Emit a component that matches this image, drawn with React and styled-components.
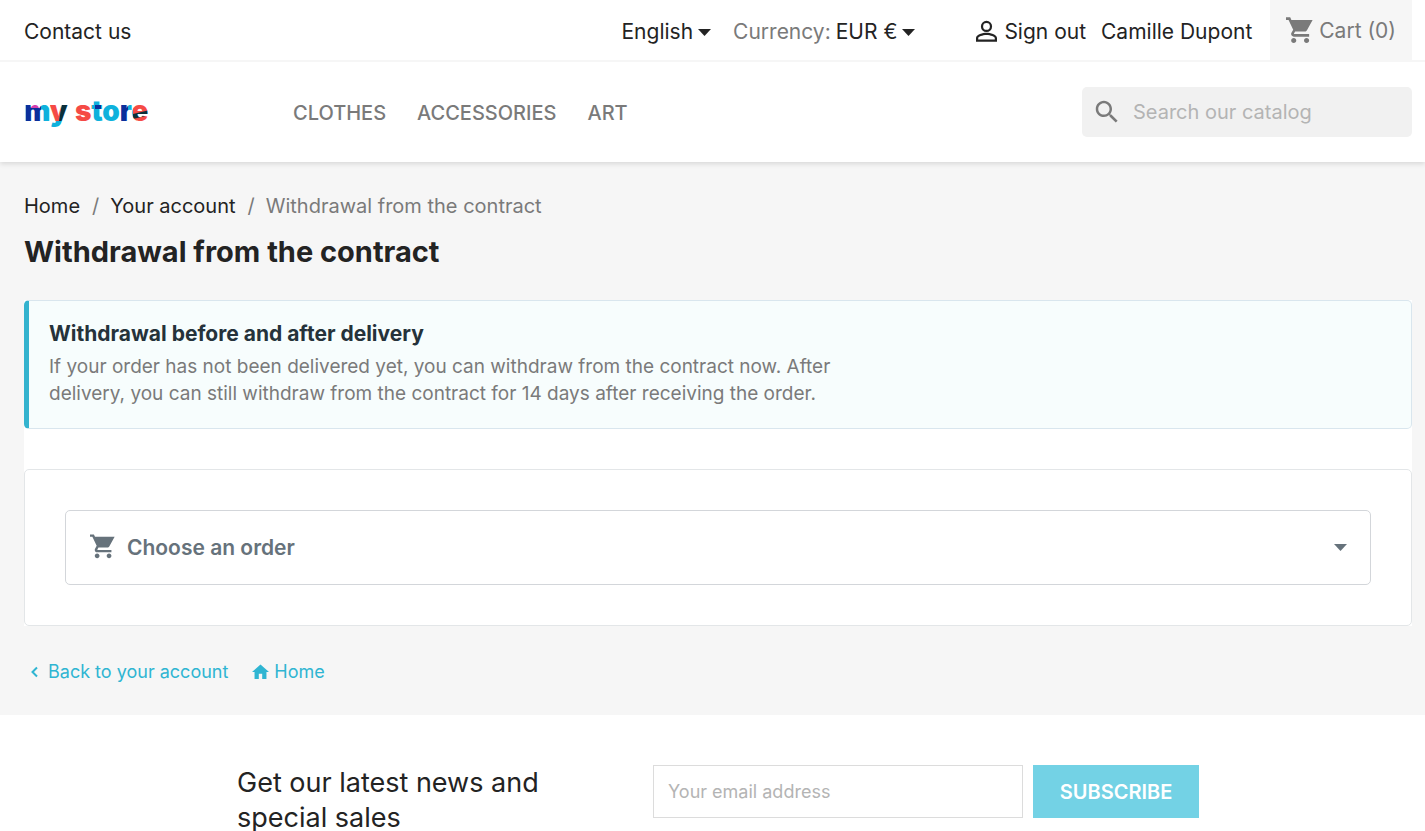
import React from "react";
import styled, { createGlobalStyle } from "styled-components";

const GlobalStyle = createGlobalStyle`
  *, *::before, *::after { box-sizing: border-box; }
  body {
    margin: 0;
    background: #fff;
    color: #232323;
    font-family: Inter, "Liberation Sans", sans-serif;
    font-size: 21px;
    line-height: 28px;
  }
  h1, h2, p, ul, ol { margin: 0; padding: 0; list-style: none; }
  a { color: inherit; text-decoration: none; }
  input, select, button { font: inherit; color: inherit; letter-spacing: inherit; border: 0; background: none; }
  svg { display: block; flex: none; }
`;

const Page = styled.div`
  display: flex;
  flex-direction: column;
`;

const Header = styled.header`
  position: relative;
  background: #fff;
  box-shadow: 0 2px 5px rgba(0, 0, 0, 0.12);
`;

const Container = styled.div`
  padding: 0 13px 0 24px;
`;

const TopBar = styled.div`
  border-bottom: 2px solid #f6f6f6;
`;

const TopBarInner = styled(Container)`
  display: flex;
  align-items: center;
  justify-content: space-between;
  height: 60px;
`;

const ContactLink = styled.a`
  padding-top: 4px;
`;

const TopRight = styled.div`
  display: flex;
  align-items: center;
  height: 100%;
`;

const Selector = styled.div`
  display: flex;
  align-items: center;
  gap: 5px;
  margin-right: ${(p) => p.$after}px;
  padding-top: 4px;
`;

const SelectorLabel = styled.label`
  color: #7a7a7a;
`;

const SelectorField = styled.select`
  appearance: none;
  field-sizing: content;
  padding: 0;
  cursor: pointer;
`;

const UserLinks = styled.nav`
  display: flex;
  align-items: center;
  gap: 15px;
  margin-right: 18px;
  padding-top: 4px;
`;

const UserLink = styled.a`
  display: flex;
  align-items: center;
  gap: 7px;
`;

const CartLink = styled.a`
  display: flex;
  align-items: center;
  gap: 6px;
  height: 100%;
  padding: 2px 16px 0;
  background: #f6f6f6;
  color: #7a7a7a;
`;

const MainBar = styled(Container)`
  display: flex;
  align-items: center;
  height: 100px;
`;

const LogoLink = styled.a`
  width: 269px;
`;

const Menu = styled.nav`
  display: flex;
  flex: 1;
  gap: 31px;
  padding-top: 2px;
  color: #7a7a7a;
  font-size: 20px;
  font-weight: 500;
  text-transform: uppercase;
`;

const SearchBox = styled.form`
  display: flex;
  align-items: center;
  gap: 11px;
  width: 330px;
  height: 50px;
  padding: 0 10px;
  border-radius: 5px;
  background: #f1f1f1;
  color: #7a7a7a;
`;

const SearchInput = styled.input`
  flex: 1;
  min-width: 0;
  padding: 0;
  outline: 0;
  font-size: 20px;
  &::placeholder { color: #b4b4b4; opacity: 1; }
`;

const Main = styled.main`
  padding: 30px 13px 29px 24px;
  background: #f6f6f6;
`;

const Breadcrumb = styled.ol`
  display: flex;
  color: #7a7a7a;
  font-size: 20px;
  li + li::before { content: "/"; margin: 0 11px 0 12px; }
  a { color: #232323; }
`;

const Title = styled.h1`
  margin: 14px 0 30px;
  font-size: 29px;
  font-weight: 700;
  line-height: 36px;
`;

const Content = styled.section`
  background: #fff;
`;

const Notice = styled.div`
  margin-bottom: 40px;
  padding: 19px 20px 21px;
  border: 1px solid #d9e6ee;
  border-left: 5px solid #34b3ce;
  border-radius: 5px;
  background: #f7fdfd;
`;

const NoticeTitle = styled.h2`
  margin-bottom: 6px;
  color: #25323a;
  font-size: 21px;
  font-weight: 700;
  line-height: 27px;
`;

const NoticeText = styled.p`
  max-width: 800px;
  color: #7a7a7a;
  font-size: 19px;
  line-height: 27px;
`;

const Panel = styled.div`
  padding: 40px;
  border: 1px solid #e3e6e8;
  border-radius: 5px;
`;

const OrderPicker = styled.label`
  display: flex;
  align-items: center;
  gap: 12px;
  height: 75px;
  padding: 0 23px 0 24px;
  border: 1px solid #d3d6da;
  border-radius: 5px;
  color: #66727b;
  cursor: pointer;
`;

const OrderSelect = styled.select`
  flex: 1;
  min-width: 0;
  appearance: none;
  padding: 0;
  font-weight: 600;
`;

const PageLinks = styled.nav`
  display: flex;
  gap: 24px;
  padding: 32px 6px 0;
  color: #2fb5d2;
  font-size: 18px;
`;

const PageLink = styled.a`
  display: flex;
  align-items: center;
  gap: 5px;
`;

const Footer = styled.footer`
  padding: 50px 13px 0 24px;
`;

const Newsletter = styled.div`
  display: flex;
  justify-content: space-between;
  max-width: 962px;
  margin: 0 auto;
`;

const NewsletterText = styled.p`
  max-width: 340px;
  font-size: 27px;
  line-height: 35px;
`;

const NewsletterForm = styled.form`
  display: flex;
  gap: 10px;
  width: 546px;
`;

const EmailInput = styled.input`
  flex: 1;
  min-width: 0;
  height: 53px;
  padding: 0 14px;
  border: 1px solid #dcdcdc;
  font-size: 18px;
  &::placeholder { color: #b4b4b4; opacity: 1; }
`;

const SubscribeButton = styled.button`
  width: 166px;
  height: 53px;
  padding: 0;
  background: #73d2e5;
  color: #fff;
  font-size: 20px;
  font-weight: 600;
  text-transform: uppercase;
`;

const CartIcon = ({ size }) => (
  <svg width={size} height={size} viewBox="1 3 21 20" fill="currentColor" overflow="visible" aria-hidden="true">
    <path d="M7 18c-1.100 0-1.990.9-1.990 2S5.900 22 7 22s2-.9 2-2-.9-2-2-2zM1 2v2h2l3.600 7.590-1.350 2.450c-.16.28-.25.61-.25.960 0 1.100.9 2 2 2h12v-2H7.420c-.14 0-.25-.11-.25-.25l.03-.12.9-1.630h7.450c.75 0 1.410-.41 1.750-1.030L21.700 4H5.210l-.94-2H1zm16 16c-1.100 0-1.990.9-1.990 2s.89 2 1.990 2 2-.9 2-2-.9-2-2-2z" />
  </svg>
);

const PersonIcon = () => (
  <svg width="21" height="21" viewBox="3 4 18 18" fill="currentColor" overflow="visible" aria-hidden="true">
    <path d="M12 4.900a2.900 2.900 0 1 1 0 5.800 2.900 2.900 0 0 1 0-5.800M12 3a4.800 4.800 0 1 0 0 9.600 4.800 4.800 0 0 0 0-9.600zM12 13.200c-3 0-9 1.500-9 4.500V21h18v-3.300c0-3-6-4.500-9-4.500zm7.100 5.900H4.900v-1.400c0-.9 3.700-2.600 7.100-2.600s7.100 1.700 7.100 2.600v1.400z" />
  </svg>
);

const SearchIcon = () => (
  <svg width="30" height="30" viewBox="0 0 24 24" fill="currentColor" aria-hidden="true">
    <path d="M15.500 14h-.79l-.28-.27C15.410 12.590 16 11.110 16 9.500 16 5.910 13.090 3 9.500 3S3 5.910 3 9.500 5.910 16 9.500 16c1.610 0 3.090-.59 4.230-1.570l.27.28v.79l5 4.990L20.490 19l-4.990-5zm-6 0C7.010 14 5 11.990 5 9.500S7.010 5 9.500 5 14 7.010 14 9.500 11.990 14 9.500 14z" />
  </svg>
);

const Caret = () => (
  <svg width="13" height="7" viewBox="0 0 13 7" fill="currentColor" aria-hidden="true">
    <path d="M0 0h13L6.500 7z" />
  </svg>
);

const ChevronIcon = () => (
  <svg width="13" height="12" viewBox="0 0 13 12" fill="none" stroke="currentColor" strokeWidth="2" aria-hidden="true">
    <path d="M7 1.500 2.500 6 7 10.500" />
  </svg>
);

const HomeIcon = () => (
  <svg width="17" height="15" viewBox="2 4 20 17" fill="currentColor" overflow="visible" aria-hidden="true">
    <path d="M10 20v-6h4v6h5v-8h3L12 3 2 12h3v8z" />
  </svg>
);

const CYAN = "#0fb1dc";
const NAVY = "#0b2f9b";
const RED = "#f54a45";
const PINK = "#d43fae";
const DARK = "#0c2f38";

/* The wordmark is filled with overlapping colour patches. */
const Logo = () => (
  <svg
    width="130"
    height="38"
    viewBox="0 0 130 38"
    role="img"
    aria-label="my store"
    fontFamily="Inter, sans-serif"
    fontSize="28"
    fontWeight="900"
  >
    <defs>
      <pattern id="patches" patternUnits="userSpaceOnUse" width="130" height="38">
        <rect width="130" height="38" fill={CYAN} />
        <rect x="2" y="10" width="15" height="19" fill={NAVY} />
        <rect x="7" y="10" width="9" height="5" fill={PINK} />
        <path d="M26 10h11v7l-2 11h-9z" fill={RED} />
        <path d="M38 10h8v8l-4 10h-7z" fill={DARK} />
        <rect x="51" y="10" width="17" height="20" fill={RED} />
        <rect x="71" y="12" width="6" height="4" fill={NAVY} />
        <rect x="97" y="10" width="7" height="20" fill={NAVY} />
        <rect x="109" y="10" width="21" height="20" fill={RED} />
        <path d="M109 21 130 16v5l-21 5z" fill={DARK} />
      </pattern>
    </defs>
    <text x="0" y="28" fill="url(#patches)">my</text>
    <text x="51" y="28" fill="url(#patches)">store</text>
  </svg>
);

export default function App() {
  return (
    <Page>
      <GlobalStyle />
      <Header>
        <TopBar>
          <TopBarInner>
            <ContactLink href="#contact">Contact us</ContactLink>
            <TopRight>
              <Selector $after={22}>
                <SelectorField aria-label="Language">
                  <option>English</option>
                </SelectorField>
                <Caret />
              </Selector>
              <Selector $after={61}>
                <SelectorLabel htmlFor="currency">Currency:</SelectorLabel>
                <SelectorField id="currency">
                  <option>EUR €</option>
                </SelectorField>
                <Caret />
              </Selector>
              <UserLinks aria-label="Account">
                <UserLink href="#sign-out">
                  <PersonIcon />
                  Sign out
                </UserLink>
                <UserLink href="#account">Camille Dupont</UserLink>
              </UserLinks>
              <CartLink href="#cart">
                <CartIcon size={27} />
                Cart (0)
              </CartLink>
            </TopRight>
          </TopBarInner>
        </TopBar>
        <MainBar>
          <LogoLink href="#home">
            <Logo />
          </LogoLink>
          <Menu aria-label="Categories">
            <a href="#clothes">Clothes</a>
            <a href="#accessories">Accessories</a>
            <a href="#art">Art</a>
          </Menu>
          <SearchBox role="search">
            <SearchIcon />
            <SearchInput type="text" placeholder="Search our catalog" aria-label="Search" />
          </SearchBox>
        </MainBar>
      </Header>

      <Main>
        <Breadcrumb>
          <li><a href="#home">Home</a></li>
          <li><a href="#account">Your account</a></li>
          <li>Withdrawal from the contract</li>
        </Breadcrumb>
        <Title>Withdrawal from the contract</Title>
        <Content>
          <Notice>
            <NoticeTitle>Withdrawal before and after delivery</NoticeTitle>
            <NoticeText>
              If your order has not been delivered yet, you can withdraw from the contract now. After
              delivery, you can still withdraw from the contract for 14 days after receiving the order.
            </NoticeText>
          </Notice>
          <Panel>
            <OrderPicker>
              <CartIcon size={25} />
              <OrderSelect aria-label="Order">
                <option>Choose an order</option>
              </OrderSelect>
              <Caret />
            </OrderPicker>
          </Panel>
        </Content>
        <PageLinks aria-label="Page links">
          <PageLink href="#account">
            <ChevronIcon />
            Back to your account
          </PageLink>
          <PageLink href="#home">
            <HomeIcon />
            Home
          </PageLink>
        </PageLinks>
      </Main>

      <Footer>
        <Newsletter>
          <NewsletterText>Get our latest news and special sales</NewsletterText>
          <NewsletterForm>
            <EmailInput type="email" placeholder="Your email address" aria-label="Your email address" />
            <SubscribeButton type="button">Subscribe</SubscribeButton>
          </NewsletterForm>
        </Newsletter>
      </Footer>
    </Page>
  );
}
